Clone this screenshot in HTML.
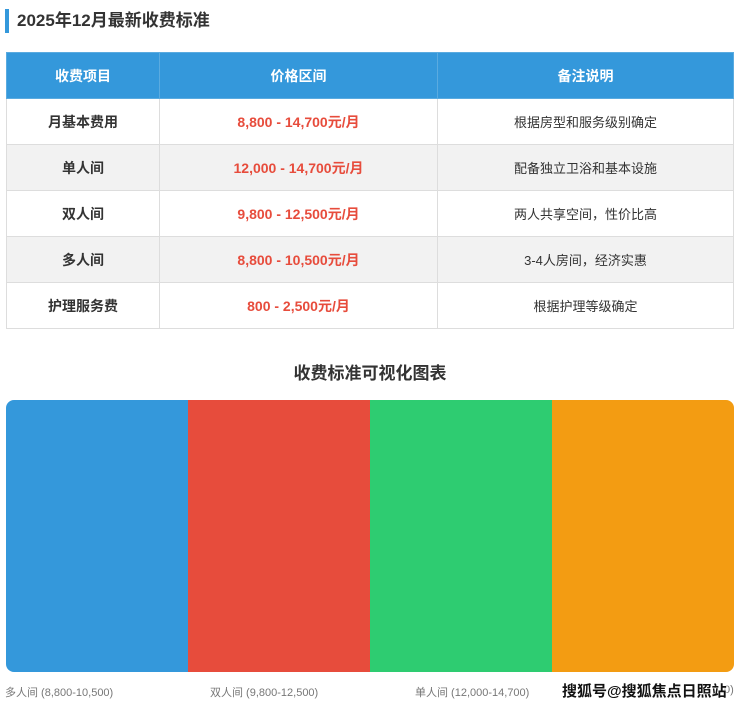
<!DOCTYPE html>
<html><head><meta charset="utf-8"><style>
body{margin:0;width:740px;height:706px;background:#fff;font-family:"Liberation Sans","Noto Sans CJK SC",sans-serif;position:relative;overflow:hidden}
.t{position:absolute;left:5px;top:9px;height:24px;border-left:4px solid #3498db;padding-left:8px;font-size:17px;font-weight:bold;color:#333;line-height:24px}
table{position:absolute;left:6px;top:52px;width:728px;border-collapse:collapse;font-size:14px;table-layout:fixed}
td,th{border:1px solid #ddd;text-align:center;height:45px;padding:0}
th{background:#3498db;color:#fff;font-weight:bold;border-color:#5aabe0}
td.a{font-weight:bold;color:#333}
td.p{color:#e74c3c;font-weight:bold}
td.n{color:#333;font-size:13px}
tr.g td{background:#f2f2f2}
.h{position:absolute;top:359px;width:740px;text-align:center;font-size:17px;font-weight:bold;color:#333}
.bar{position:absolute;left:6px;top:400px;width:728px;height:272px;border-radius:8px;overflow:hidden;display:flex}
.bar div{flex:1}
.l{position:absolute;top:684px;font-size:11px;color:#777}
.w{position:absolute;left:562px;top:680px;font-size:15px;font-weight:bold;color:#111;text-shadow:0 0 2px #fff,0 0 2px #fff}
</style></head><body>
<div class="t">2025年12月最新收费标准</div>
<table>
<colgroup><col style="width:153px"><col style="width:278px"><col></colgroup>
<tr><th>收费项目</th><th>价格区间</th><th>备注说明</th></tr>
<tr><td class="a">月基本费用</td><td class="p">8,800 - 14,700元/月</td><td class="n">根据房型和服务级别确定</td></tr>
<tr class="g"><td class="a">单人间</td><td class="p">12,000 - 14,700元/月</td><td class="n">配备独立卫浴和基本设施</td></tr>
<tr><td class="a">双人间</td><td class="p">9,800 - 12,500元/月</td><td class="n">两人共享空间，性价比高</td></tr>
<tr class="g"><td class="a">多人间</td><td class="p">8,800 - 10,500元/月</td><td class="n">3-4人房间，经济实惠</td></tr>
<tr><td class="a">护理服务费</td><td class="p">800 - 2,500元/月</td><td class="n">根据护理等级确定</td></tr>
</table>
<div class="h">收费标准可视化图表</div>
<div class="bar"><div style="background:#3498db"></div><div style="background:#e74c3c"></div><div style="background:#2ecc71"></div><div style="background:#f39c12"></div></div>
<div class="l" style="left:5px">多人间 (8,800-10,500)</div>
<div class="l" style="left:210px">双人间 (9,800-12,500)</div>
<div class="l" style="left:415px">单人间 (12,000-14,700)</div>
<div class="l" style="left:724px">0)</div>
<div class="w">搜狐号@搜狐焦点日照站</div>
</body></html>
